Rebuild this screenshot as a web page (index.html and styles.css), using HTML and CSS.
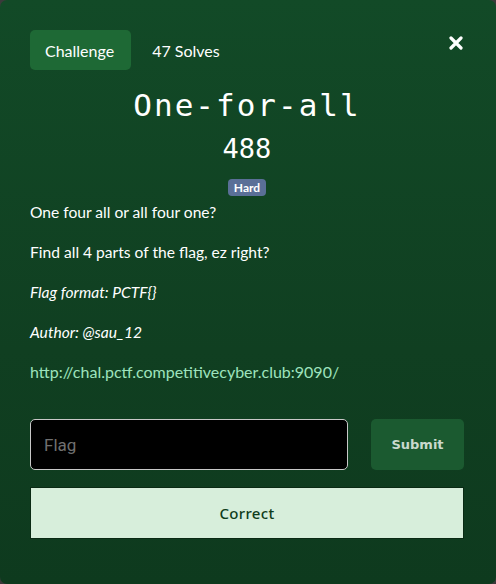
FILE: index.html
```html
<!DOCTYPE html>
<html>
<head>
<meta charset="utf-8">
<link rel="stylesheet" href="styles.css">
</head>
<body>
<div class="modal">
  <div class="top">
    <span class="tab">Challenge</span>
    <span class="solves">47 Solves</span>
    <span class="close">
      <svg width="14" height="14" viewBox="0 0 14 14"><path d="M2 2 L12 12 M12 2 L2 12" stroke="#fff" stroke-width="3.2" stroke-linecap="round"/></svg>
    </span>
  </div>
  <h1 class="title">One-for-all</h1>
  <div class="points">488</div>
  <div class="badge-row"><span class="badge">Hard</span></div>
  <div class="desc">
    <p>One four all or all four one?</p>
    <p>Find all 4 parts of the flag, ez right?</p>
    <p><em>Flag format: PCTF{}</em></p>
    <p><em>Author: @sau_12</em></p>
    <p><a class="link" href="#">http://chal.pctf.competitivecyber.club:9090/</a></p>
  </div>
  <div class="form">
    <input class="flag" type="text" placeholder="Flag">
    <button class="submit">Submit</button>
  </div>
  <div class="result">Correct</div>
</div>
</body>
</html>
```
FILE: styles.css
```css
html, body {
  margin: 0;
  padding: 0;
  background: #3a3a3a;
}
.modal {
  width: 496px;
  height: 584px;
  box-sizing: border-box;
  padding: 30px 32px 0 30px;
  border-radius: 7px;
  background: linear-gradient(180deg, #124a27 0%, #103f21 60%, #0e3a1e 100%);
  font-family: Lato, "Liberation Sans", sans-serif;
  color: #fff;
}
.top {
  display: flex;
  align-items: center;
  height: 40px;
}
.tab {
  display: flex;
  align-items: center;
  height: 40px;
  padding: 0 17px 0 15px;
  background: #1e6935;
  border-radius: 5px;
  font-size: 16px;
}
.solves {
  margin-left: 21px;
  font-size: 16px;
}
.close {
  margin-left: auto;
  margin-right: 1px;
  display: flex;
  margin-top: -14px;
}
.title {
  margin: 16px 0 0;
  text-align: center;
  font-family: "DejaVu Sans Mono", monospace;
  font-weight: normal;
  font-size: 31px;
  letter-spacing: 2px;
  line-height: 38px;
}
.points {
  margin-top: 8px;
  text-align: center;
  font-family: "DejaVu Sans Mono", monospace;
  font-size: 27px;
  line-height: 34px;
}
.badge-row {
  margin-top: 13px;
  display: flex;
  justify-content: center;
}
.badge {
  background: #5a6f97;
  border-radius: 4px;
  font-size: 12px;
  font-weight: bold;
  padding: 0 6px;
  line-height: 17px;
  height: 17px;
}
.desc {
  margin-top: 5px;
  font-size: 15.6px;
}
.desc p {
  margin: 0 0 18px;
  line-height: 22px;
}
.link {
  color: #9ee3bd;
  text-decoration: none;
  font-size: 16px;
}
.form {
  margin-top: 36px;
  display: flex;
  gap: 23px;
}
.flag {
  flex: 1;
  height: 51px;
  box-sizing: border-box;
  background: #000;
  border: 1px solid #c8c8c8;
  border-radius: 5px;
  padding: 0 13px;
  font-family: Roboto, "Liberation Sans", sans-serif;
  font-size: 17px;
  color: #fff;
}
.flag::placeholder {
  color: #707070;
}
.submit {
  width: 93px;
  height: 51px;
  background: #1b5a30;
  border: none;
  border-radius: 5px;
  color: #c9d9cd;
  font-family: "DejaVu Sans", sans-serif;
  font-weight: bold;
  font-size: 13px;
}
.result {
  margin-top: 17px;
  height: 52px;
  box-sizing: border-box;
  border: 1px solid #0a2a14;
  background: #d7eedb;
  color: #0f3d1c;
  display: flex;
  align-items: center;
  justify-content: center;
  font-family: "Noto Sans", sans-serif;
  font-weight: 500;
  font-size: 15px;
  letter-spacing: 0.3px;
}
```
